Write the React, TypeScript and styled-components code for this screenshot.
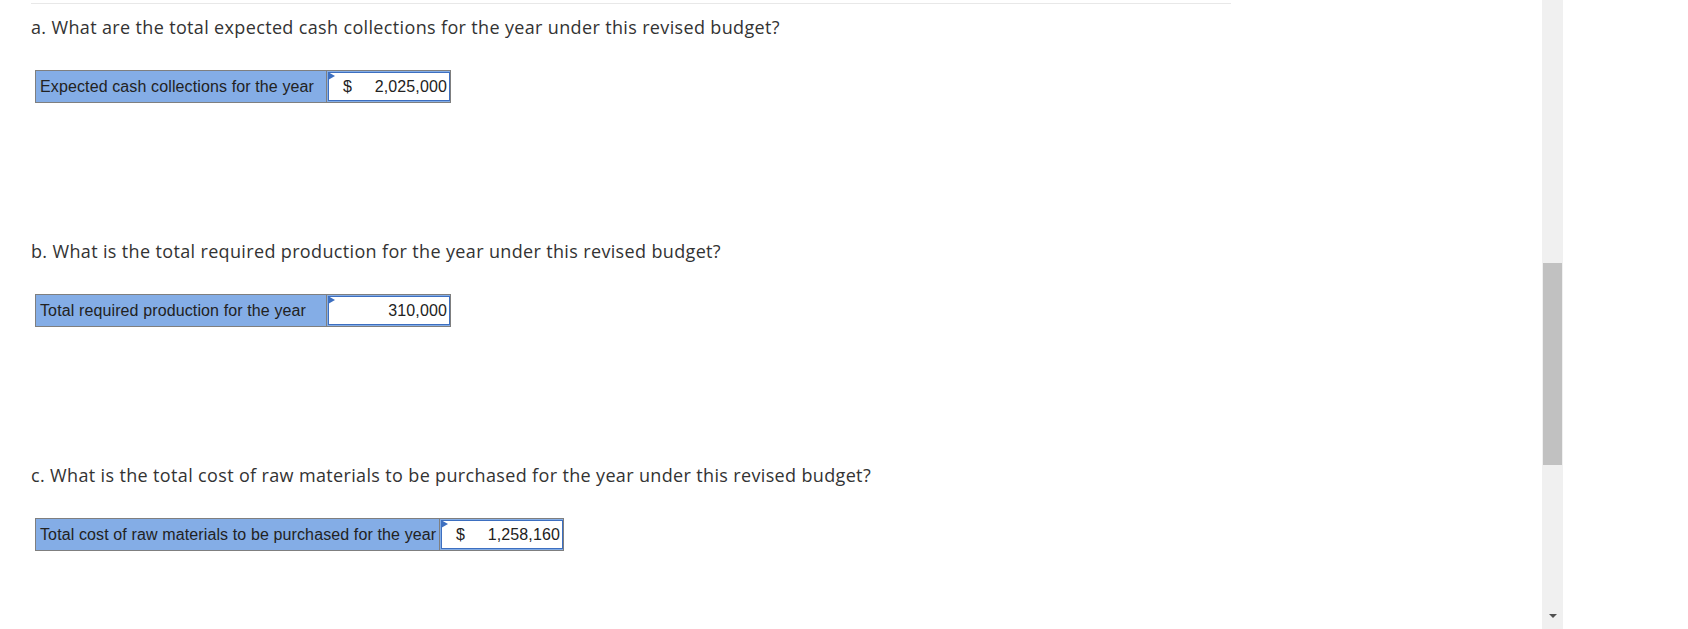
import React from "react";
import styled, { createGlobalStyle } from "styled-components";

const Global = createGlobalStyle`
  html, body { margin: 0; padding: 0; background: #ffffff; }
  body { font-family: "Liberation Sans", Arial, sans-serif; }
`;

const Page = styled.div`
  display: flex;
  height: 629px;
  overflow: hidden;
`;

const Main = styled.div`
  flex: 0 0 1542px;
  padding-left: 31px;
  box-sizing: border-box;
`;

const Content = styled.div`
  width: 1200px;
  border-top: 1px solid #e8e8e8;
  margin-top: 3px;
`;

const Section = styled.section`
  display: flex;
  flex-direction: column;
  align-items: flex-start;
  padding-bottom: 125px;
`;

const Question = styled.p`
  margin: 11px 0 0 0;
  font-family: "Open Sans", "Liberation Sans", sans-serif;
  font-size: 18px;
  letter-spacing: 0.35px;
  line-height: 24px;
  color: #333333;
`;

const AnswerTable = styled.div`
  display: flex;
  margin: 31px 0 0 4px;
  border: 1px solid #7f7f7f;
  background: #84ade6;
  height: 31px;
  font-size: 16px;
  letter-spacing: 0.12px;
  color: #222222;
`;

const Label = styled.div<{ $w: number }>`
  width: ${(p) => p.$w}px;
  box-sizing: border-box;
  padding: 0 0 0 4px;
  display: flex;
  align-items: center;
  border-right: 1px solid #7f7f7f;
`;

const InputCell = styled.div`
  position: relative;
  width: 122px;
  box-sizing: border-box;
  margin: 1px 0 1px 1px;
  border: 1px solid #3d6fc0;
  background: #ffffff;
  display: flex;
  align-items: center;
  justify-content: space-between;
  padding: 0 2px 0 14px;
`;

const Flag = styled.span`
  position: absolute;
  left: -1px;
  top: -1px;
  width: 0;
  height: 0;
  border-left: 7px solid #3d6fc0;
  border-top: 4px solid transparent;
  border-bottom: 4px solid transparent;
`;

const Value = styled.span`
  margin-left: auto;
`;

const Track = styled.div`
  flex: 0 0 21px;
  background: #f0f0f0;
  display: flex;
  flex-direction: column;
  align-items: center;
`;

const Gap = styled.div<{ $h: number }>`
  flex: 0 0 ${(p) => p.$h}px;
`;

const Thumb = styled.div`
  width: 19px;
  height: 202px;
  background: #c1c1c1;
`;

const Arrow = styled.div`
  margin-top: auto;
  margin-bottom: 11px;
  width: 0;
  height: 0;
  border-left: 4px solid transparent;
  border-right: 4px solid transparent;
  border-top: 4px solid #505050;
`;

const items = [
  {
    q: "a. What are the total expected cash collections for the year under this revised budget?",
    label: "Expected cash collections for the year",
    w: 291,
    dollar: true,
    v: "2,025,000",
  },
  {
    q: "b. What is the total required production for the year under this revised budget?",
    label: "Total required production for the year",
    w: 291,
    dollar: false,
    v: "310,000",
  },
  {
    q: "c. What is the total cost of raw materials to be purchased for the year under this revised budget?",
    label: "Total cost of raw materials to be purchased for the year",
    w: 404,
    dollar: true,
    v: "1,258,160",
  },
];

export default function App() {
  return (
    <>
      <Global />
      <Page>
        <Main>
          <Content>
            {items.map((it) => (
              <Section key={it.label}>
                <Question>{it.q}</Question>
                <AnswerTable>
                  <Label $w={it.w}>{it.label}</Label>
                  <InputCell>
                    <Flag />
                    {it.dollar && <span>$</span>}
                    <Value>{it.v}</Value>
                  </InputCell>
                </AnswerTable>
              </Section>
            ))}
          </Content>
        </Main>
        <Track>
          <Gap $h={263} />
          <Thumb />
          <Arrow />
        </Track>
      </Page>
    </>
  );
}
